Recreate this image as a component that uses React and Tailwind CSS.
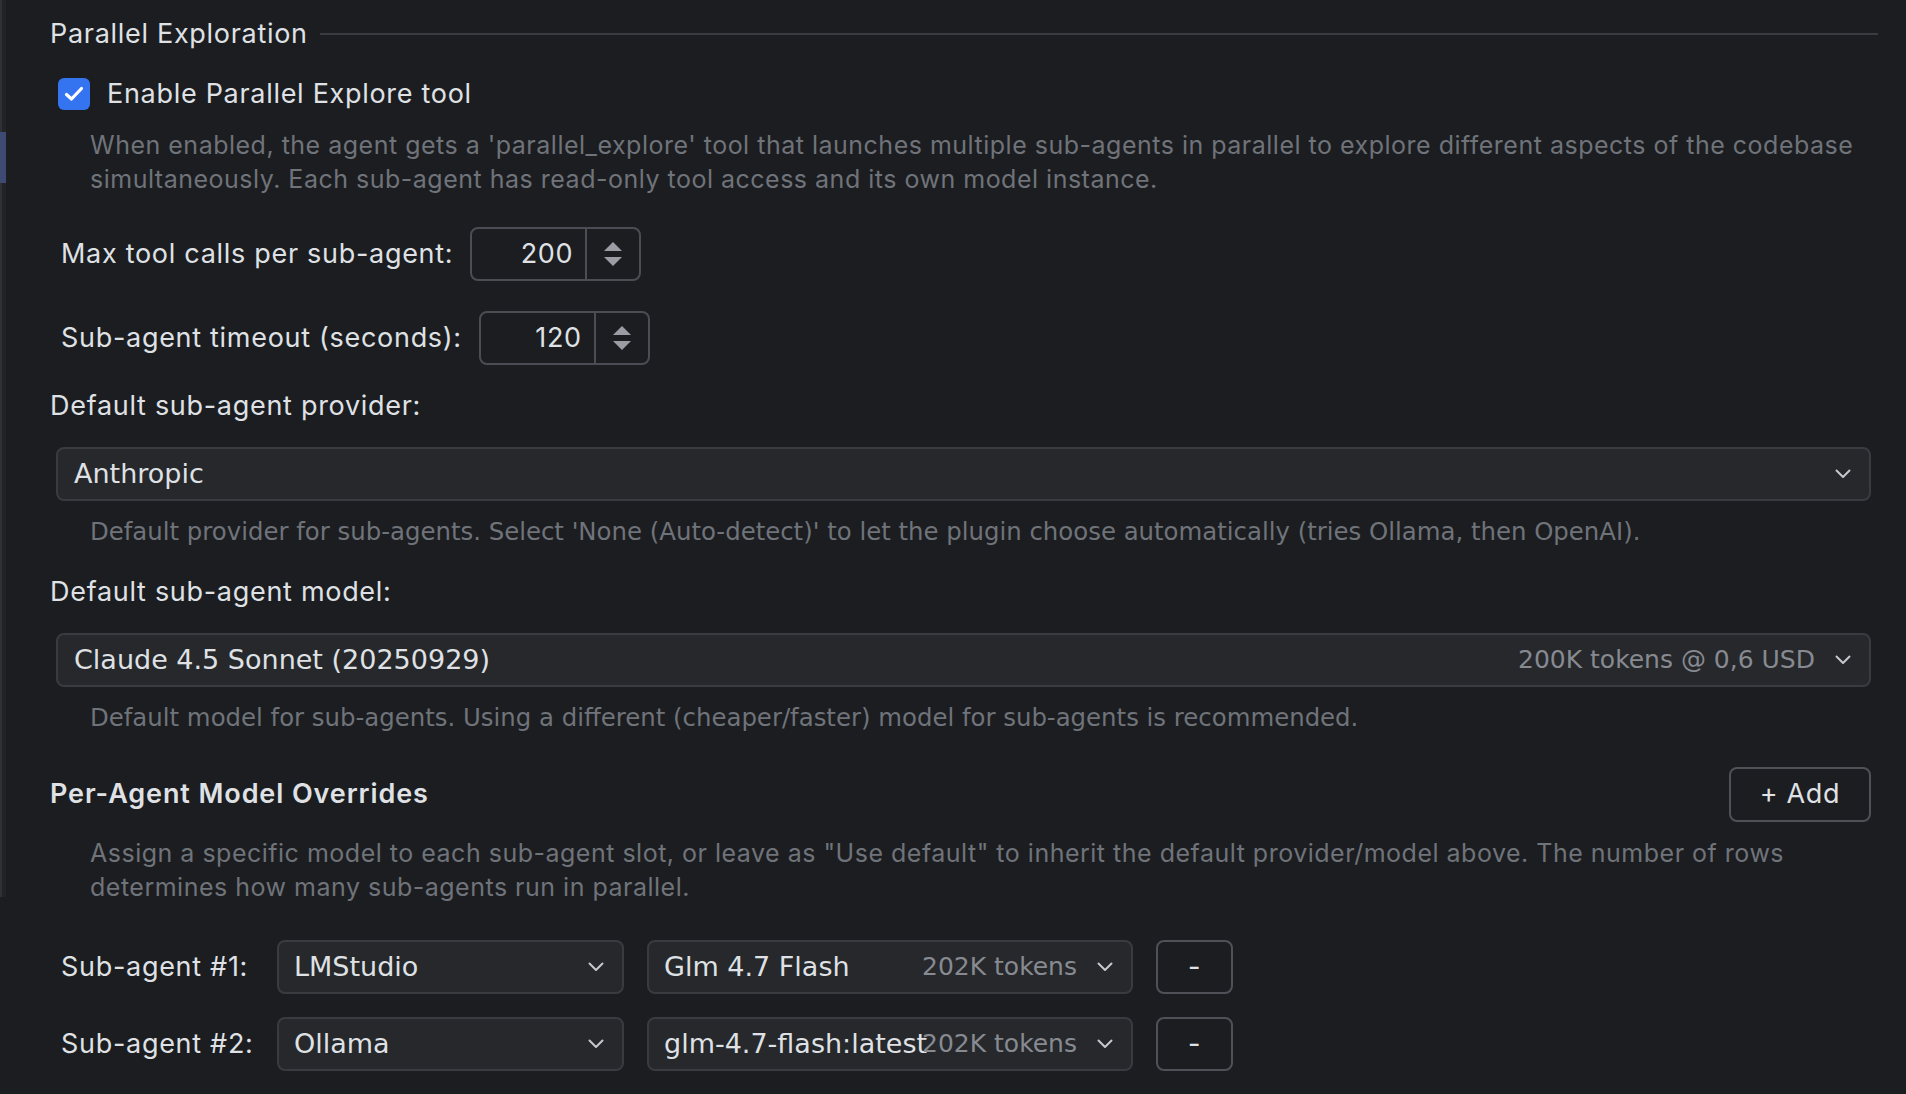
import React from "react";

const inter = "[font-family:Inter,sans-serif]";
const lucida = "[font-family:'DejaVu_Sans',sans-serif]";
const label = "text-[27px] tracking-[0.7px] text-[#dfe1e5]";
const comment = "text-[25px] leading-[34px] tracking-[0.5px] text-[#6f737a]";

function Chevron() {
  return (
    <svg width="16" height="10" viewBox="0 0 16 10" fill="none" className="shrink-0">
      <path
        d="M1.5 1.5 8 8l6.5-6.5"
        stroke="#c5c8ce"
        strokeWidth="2"
        strokeLinecap="round"
        strokeLinejoin="round"
      />
    </svg>
  );
}

function Spinner({ value }) {
  return (
    <div className="flex h-[54px] w-[171px] rounded-[8px] border-2 border-[#4a4d53]">
      <div className={`flex flex-1 items-center justify-end pr-[12px] ${label}`}>{value}</div>
      <div className="w-[2px] bg-[#4a4d53]" />
      <div className="flex w-[52px] flex-col items-center justify-center gap-[6px]">
        <svg width="18" height="9" viewBox="0 0 18 9">
          <path d="M9 0 18 9H0z" fill="#9a9da3" />
        </svg>
        <svg width="18" height="9" viewBox="0 0 18 9">
          <path d="M0 0h18L9 9z" fill="#9a9da3" />
        </svg>
      </div>
    </div>
  );
}

function Select({ value, extra, className = "" }) {
  return (
    <div
      className={`flex h-full items-center rounded-[8px] border-2 border-[#393b40] bg-[#26282b] pl-[15px] pr-[18px] ${className}`}
    >
      <div className="grid min-w-0 flex-1 items-center">
        <span className={`col-start-1 row-start-1 justify-self-start whitespace-nowrap text-[27px] text-[#dfe1e5] ${lucida}`}>
          {value}
        </span>
        {extra && (
          <span className={`col-start-1 row-start-1 justify-self-end whitespace-nowrap text-[25px] text-[#878a91] ${lucida}`}>
            {extra}
          </span>
        )}
      </div>
      <div className="ml-[20px]">
        <Chevron />
      </div>
    </div>
  );
}

function SubAgentRow({ n, provider, model, tokens, first }) {
  return (
    <div className={`${first ? "mt-[36px]" : "mt-[23px]"} ml-[11px] flex h-[54px] items-center`}>
      <div className={`w-[216px] ${label}`}>Sub-agent #{n}:</div>
      <Select value={provider} className="w-[347px]" />
      <Select value={model} extra={tokens} className="ml-[23px] w-[486px]" />
      <button className={`ml-[23px] flex h-full w-[77px] items-center justify-center rounded-[8px] border-2 border-[#4e5157] ${label}`}>
        -
      </button>
    </div>
  );
}

export default function App() {
  return (
    <div className={`flex min-h-screen w-full bg-[#1c1d20] ${inter}`}>
      {/* left border of the settings tree */}
      <div className="flex h-[897px] w-[6px] flex-col">
        <div className="h-[132px] bg-[linear-gradient(to_right,#2f3134_2px,#222326_2px)]" />
        <div className="h-[51px] bg-[#3d4a72]" />
        <div className="flex-1 bg-[linear-gradient(to_right,#2f3134_2px,#222326_2px)]" />
      </div>

      <div className="flex flex-1 flex-col pl-[44px] pr-[28px]">
        <div className="mt-[18px] flex h-[32px] items-center">
          <span className={`leading-[32px] ${label}`}>Parallel Exploration</span>
          <div className="ml-[12px] h-[2px] flex-1 bg-[#393b40]" />
        </div>

        <label className="ml-[8px] mt-[28px] flex h-[32px] items-center gap-[17px]">
          <span className="flex h-[32px] w-[32px] items-center justify-center rounded-[6px] bg-[#3574f0]">
            <svg width="20" height="16" viewBox="0 0 20 16" fill="none">
              <path
                d="M2.5 8.5 7.5 13 17.5 2.5"
                stroke="#fff"
                strokeWidth="3.2"
                strokeLinecap="round"
                strokeLinejoin="round"
              />
            </svg>
          </span>
          <span className={label}>Enable Parallel Explore tool</span>
        </label>

        <p className={`ml-[40px] mt-[18px] ${comment}`}>
          When enabled, the agent gets a 'parallel_explore' tool that launches multiple sub-agents in
          parallel to explore different aspects of the codebase simultaneously. Each sub-agent has
          read-only tool access and its own model instance.
        </p>

        <div className="ml-[11px] mt-[31px] flex items-center gap-[17px]">
          <span className={label}>Max tool calls per sub-agent:</span>
          <Spinner value="200" />
        </div>

        <div className="ml-[11px] mt-[30px] flex items-center gap-[17px]">
          <span className={label}>Sub-agent timeout (seconds):</span>
          <Spinner value="120" />
        </div>

        <div className={`mt-[25px] leading-[32px] ${label}`}>Default sub-agent provider:</div>
        <div className="ml-[6px] mr-[7px] mt-[25px] h-[54px]">
          <Select value="Anthropic" className="pl-[16px] pr-[17px]" />
        </div>
        <p className={`ml-[40px] mt-[14px] text-[24.4px] leading-[34px] text-[#6f737a] ${lucida}`}>
          Default provider for sub-agents. Select 'None (Auto-detect)' to let the plugin choose
          automatically (tries Ollama, then OpenAI).
        </p>

        <div className={`mt-[27px] leading-[32px] ${label}`}>Default sub-agent model:</div>
        <div className="ml-[6px] mr-[7px] mt-[25px] h-[54px]">
          <Select
            value="Claude 4.5 Sonnet (20250929)"
            extra="200K tokens @ 0,6 USD"
            className="pl-[16px] pr-[17px]"
          />
        </div>
        <p className={`ml-[40px] mt-[14px] text-[24.4px] leading-[34px] text-[#6f737a] ${lucida}`}>
          Default model for sub-agents. Using a different (cheaper/faster) model for sub-agents is
          recommended.
        </p>

        <div className="mr-[7px] mt-[32px] flex h-[55px] items-center justify-between">
          <span className="text-[27px] font-semibold tracking-[0.9px] text-[#dfe1e5]">
            Per-Agent Model Overrides
          </span>
          <button className={`flex h-full w-[142px] items-center justify-center rounded-[8px] border-2 border-[#4e5157] ${label}`}>
            + Add
          </button>
        </div>
        <p className={`ml-[40px] mt-[14px] ${comment}`}>
          Assign a specific model to each sub-agent slot, or leave as "Use default" to inherit the
          default provider/model above. The number of rows determines how many sub-agents run in
          parallel.
        </p>

        <SubAgentRow n={1} provider="LMStudio" model="Glm 4.7 Flash" tokens="202K tokens" first />
        <SubAgentRow n={2} provider="Ollama" model="glm-4.7-flash:latest" tokens="202K tokens" />
      </div>
    </div>
  );
}
